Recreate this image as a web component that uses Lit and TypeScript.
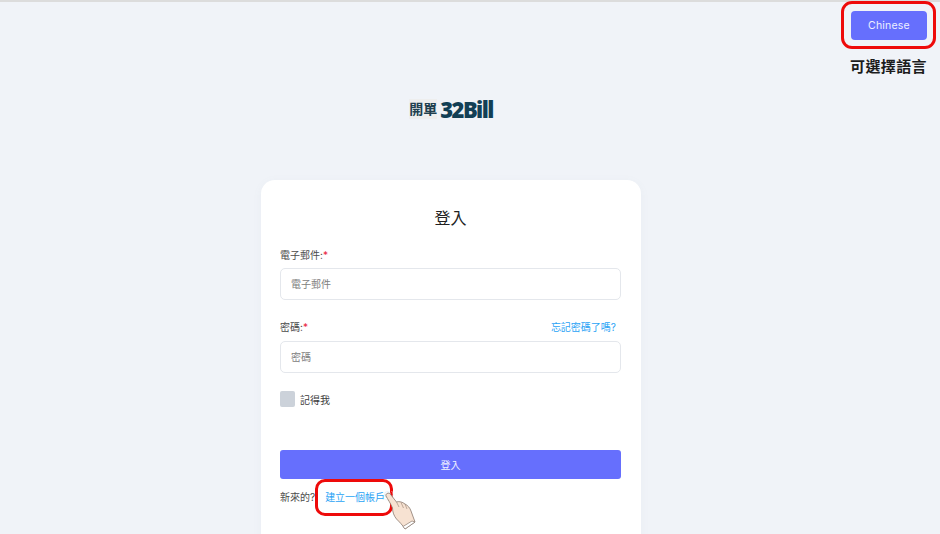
import { LitElement, html, css } from "lit";
import { customElement } from "lit/decorators.js";

@customElement("app-root")
export class AppRoot extends LitElement {
  static styles = css`
    :host {
      display: block;
      width: 940px;
      height: 534px;
      overflow: hidden;
      position: relative;
      background: #f0f3f8;
      font-family: Inter, "Noto Sans CJK TC", "Noto Sans", sans-serif;
      color: #4b4b4b;
    }
    .topline { height: 2px; background: #dcdcdc; }
    .top {
      display: flex;
      justify-content: flex-end;
      padding: 9px 13px 0 0;
      height: 29px;
    }
    .lang {
      width: 76px;
      height: 29px;
      border: 0;
      border-radius: 4px;
      background: #666ffd;
      color: #eef0ff;
      font: 10.5px Inter, "Noto Sans", sans-serif;
      letter-spacing: 0.2px;
      padding: 0;
    }
    .hint {
      display: flex;
      justify-content: flex-end;
      padding: 16px 13px 0 0;
      height: 37px;
      box-sizing: border-box;
      font-size: 15px;
      line-height: 21px;
      font-weight: 700;
      color: #1c1c1c;
      letter-spacing: 0.4px;
    }
    .main { width: 902px; }
    .logo {
      display: flex;
      justify-content: center;
      align-items: center;
      gap: 3px;
      height: 20px;
      margin-top: 22px;
      color: #123f55;
    }
    .logo .zh {
      font-size: 14px;
      font-weight: 700;
      background: #eeeeee;
      color: #21404f;
      line-height: 20px;
    }
    .logo .en {
      font: 800 22px/20px "Open Sans", "Liberation Sans", sans-serif;
      letter-spacing: -1.6px;
    }
    .card {
      width: 380px;
      margin: 61px auto 0;
      box-sizing: border-box;
      height: 420px;
      background: #fff;
      border-radius: 14px;
      padding: 24px 20px 0 19px;
      box-shadow: 0 2px 10px rgba(120, 130, 160, 0.06);
    }
    h1 {
      margin: 0;
      text-align: center;
      font-size: 16px;
      line-height: 28px;
      font-weight: 400;
      color: #222;
    }
    .field-head {
      display: flex;
      justify-content: space-between;
      align-items: center;
      height: 18px;
      font-size: 10px;
      line-height: 18px;
      color: #4b4b4b;
    }
    .email-head { margin-top: 14px; }
    .pass-head { margin-top: 18px; }
    .req { color: #ea1c3c; }
    a { color: #2aa3f5; text-decoration: none; }
    .forgot { margin-right: 5px; }
    .input {
      margin-top: 4px;
      height: 32px;
      border: 1px solid #e4e7ec;
      border-radius: 5px;
      background: #fff;
      display: block;
      width: 100%;
      box-sizing: border-box;
      padding: 0 10px;
      font-size: 10px;
      font-family: inherit;
      outline: none;
      color: #444;
    }
    .pass-input { margin-top: 5px; }
    .input::placeholder { color: #808080; opacity: 1; }
    .remember {
      display: flex;
      align-items: center;
      gap: 5px;
      margin-top: 18px;
      height: 16px;
      font-size: 10px;
      color: #3c3c3c;
    }
    .box {
      width: 15px;
      height: 16px;
      border-radius: 2px;
      background: #ccd2da;
    }
    .submit {
      display: block;
      width: 100%;
      height: 29px;
      margin-top: 43px;
      border: 0;
      border-radius: 3px;
      background: #666ffd;
      color: #f2f3ff;
      font-size: 10px;
      font-family: inherit;
      padding: 0;
    }
    .signup {
      display: flex;
      gap: 10px;
      margin-top: 8px;
      height: 20px;
      font-size: 10px;
      line-height: 20px;
      color: #4b4b4b;
    }
    .mark {
      position: absolute;
      box-sizing: border-box;
      border: 3px solid #ee0a0a;
      pointer-events: none;
    }
    .mark-lang { left: 841px; top: 1px; width: 95px; height: 48px; border-radius: 11px; }
    .mark-link { left: 315px; top: 479px; width: 78px; height: 37px; border-radius: 10px; }
    .hand { position: absolute; left: 384px; top: 491px; width: 34px; height: 40px; }
  `;

  render() {
    return html`
      <div class="topline"></div>
      <div class="top"><button class="lang">Chinese</button></div>
      <div class="hint">可選擇語言</div>
      <div class="main">
        <div class="logo">
          <span class="zh">開單</span><span class="en">32Bill</span>
        </div>
        <div class="card">
          <h1>登入</h1>
          <div class="field-head email-head"><span>電子郵件:<span class="req">*</span></span></div>
          <input class="input" placeholder="電子郵件" />
          <div class="field-head pass-head">
            <span>密碼:<span class="req">*</span></span>
            <a class="forgot" href="#">忘記密碼了嗎?</a>
          </div>
          <input class="input pass-input" placeholder="密碼" />
          <div class="remember"><span class="box"></span><span>記得我</span></div>
          <button class="submit">登入</button>
          <div class="signup"><span>新來的?</span><a href="#">建立一個帳戶</a></div>
        </div>
      </div>
      <div class="mark mark-lang"></div>
      <div class="mark mark-link"></div>
      <svg class="hand" viewBox="0 0 34 40" fill="none">
        <circle cx="3.5" cy="3.5" r="3" stroke="#d8e6f0" stroke-width="0.6"/>
        <circle cx="3.5" cy="3.5" r="5.5" stroke="#e6eff5" stroke-width="0.6"/>
        <path d="M3 2.5 C4.5 1.5 6 2.5 7 4 L12.5 11 C15 10 18.5 11 21 13 C24 14.5 26 17 27 20 L31 31 L21 38 C18.5 34 15 30.5 12.5 28 C10 25 8.5 21 8.5 17 C6.5 12 3.5 8 2 5 C1.7 4 2 3 3 2.5 Z" fill="#f7e2d2" stroke="#8a7a70" stroke-width="0.8"/>
        <path d="M12.5 11 L15 16 M17 11.5 L19.5 17 M21 13 L23 18" stroke="#a58f80" stroke-width="0.7"/>
        <path d="M28 30 L31 31 L21 38 L19 35.5 Z" fill="#ffffff" stroke="#8a7a70" stroke-width="0.7"/>
      </svg>
    `;
  }
}
